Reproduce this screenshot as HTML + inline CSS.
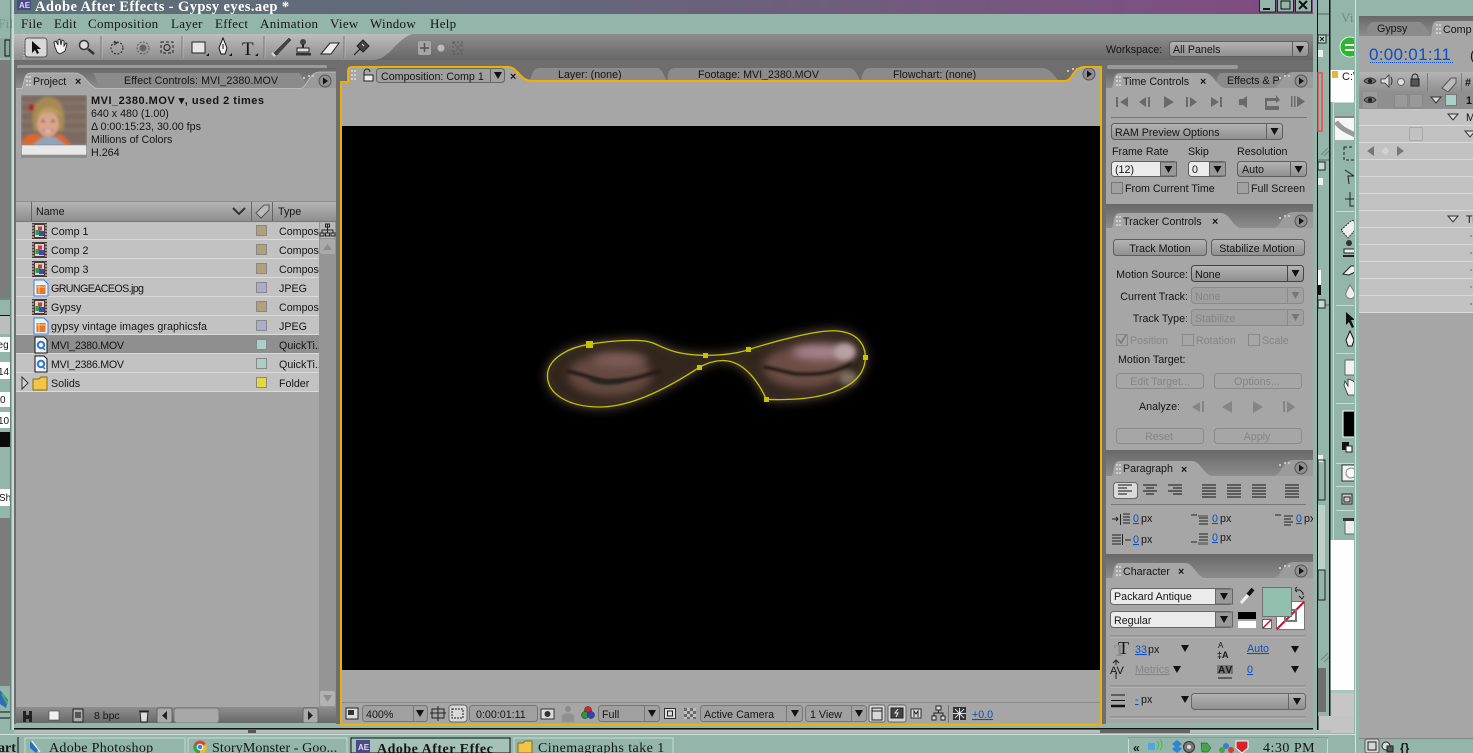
<!DOCTYPE html>
<html><head><meta charset="utf-8"><style>
html,body{margin:0;padding:0;background:#93b5aa;overflow:hidden}
svg{display:block;font-family:"Liberation Sans",sans-serif;font-size:10.7px}
text{fill:#151515}
.s{font-family:"Liberation Serif",serif;font-size:13px;letter-spacing:.3px}
.d text,text.d{fill:#858585}
.b{fill:#0b4fc4;text-decoration:underline dotted}
.m{text-anchor:middle}.e{text-anchor:end}
</style></head><body>
<svg width="1473" height="753" viewBox="0 0 1473 753" xmlns="http://www.w3.org/2000/svg">
<defs>
<linearGradient id="tb" x1="0" x2="1" y1="0" y2="0"><stop offset="0" stop-color="#5c7078"/><stop offset=".45" stop-color="#66667a"/><stop offset="1" stop-color="#824b82"/></linearGradient>
<linearGradient id="g" x1="0" x2="0" y1="0" y2="1"><stop offset="0" stop-color="#b4b4b4"/><stop offset="1" stop-color="#8f8f8f"/></linearGradient>
<linearGradient id="g2" x1="0" x2="0" y1="0" y2="1"><stop offset="0" stop-color="#8e8e8e"/><stop offset="1" stop-color="#666"/></linearGradient>
<linearGradient id="tool" x1="0" x2="0" y1="0" y2="1"><stop offset="0" stop-color="#bdbdbd"/><stop offset="1" stop-color="#8d8d8d"/></linearGradient>
<linearGradient id="hd" x1="0" x2="0" y1="0" y2="1"><stop offset="0" stop-color="#686868"/><stop offset="1" stop-color="#8c8c8c"/></linearGradient>
<filter id="b6" x="-30%" y="-60%" width="160%" height="220%"><feGaussianBlur stdDeviation="6"/></filter>
<filter id="b4" x="-40%" y="-80%" width="180%" height="260%"><feGaussianBlur stdDeviation="4.500"/></filter>
<filter id="b3" x="-30%" y="-50%" width="160%" height="200%"><feGaussianBlur stdDeviation="3"/></filter>
<filter id="b1" x="-30%" y="-100%" width="160%" height="300%"><feGaussianBlur stdDeviation="1.200"/></filter>
<path id="tri" d="M-4,-3H4L0,4Z" fill="#111"/>
<path id="trig" d="M-4,-3H4L0,4Z" fill="#777"/>
<g id="menu"><circle r="6" fill="#8f8f8f" stroke="#555"/><path d="M-2,-3.500L3,0L-2,3.500Z" fill="#111"/><path d="M-22,-4h2v2h-2zM-17,-6h2v2h-2zM-13,-6h2v2h-2z" fill="#c4c4c4"/></g>
<g id="grip" fill="#cfcfcf"><rect x="0" y="0" width="2" height="2"/><rect x="3" y="0" width="2" height="2"/><rect x="0" y="4" width="2" height="2"/><rect x="3" y="4" width="2" height="2"/><rect x="0" y="8" width="2" height="2"/><rect x="3" y="8" width="2" height="2"/></g>
<g id="cmp"><rect x="0" y="0" width="15" height="16" fill="#4a3a3a"/><rect x="3" y="2" width="9" height="12" fill="#d8d4cc"/><path d="M0,2h2M0,5h2M0,8h2M0,11h2M0,14h2M13,2h2M13,5h2M13,8h2M13,11h2M13,14h2" stroke="#ddd" stroke-width="1"/><rect x="6" y="3.500" width="4" height="4" fill="#d33"/><rect x="3.500" y="7" width="5" height="5" fill="#29a04a"/><rect x="7" y="8" width="5" height="5" fill="#3b45c8"/></g>
<g id="jpg"><path d="M1,0H11L15,4V16H1Z" fill="#e8f2ff" stroke="#4a7ad0"/><rect x="3.500" y="5" width="9" height="9" fill="#e8762a"/><path d="M4,7h8M6,5v9" stroke="#f6d36a"/></g>
<g id="mov"><path d="M1,0H10L13,3V16H1Z" fill="#f4f4f4" stroke="#111"/><circle cx="7" cy="8" r="3.200" fill="none" stroke="#2a7ad8" stroke-width="2"/><path d="M8,10l3,3" stroke="#2a7ad8" stroke-width="1.500"/></g>
<g id="eye"><path d="M-6,0C-3,-4 3,-4 6,0C3,3.500 -3,3.500 -6,0Z" fill="#777" stroke="#333"/><circle r="2.200" fill="#222"/></g>
<g id="al"><path d="M0,0h14M0,3h14M0,6h14M0,9h14M0,12h14" stroke="#111" stroke-width="1"/></g>
</defs>

<rect width="1473" height="753" fill="#93b5aa"/>
<!-- left strip -->
<text x="-2" y="28" class="s" style="fill:#75918a">Fil</text>
<rect x="0" y="38" width="10" height="20" fill="#8aa79e"/><rect x="5" y="40" width="5" height="16" fill="none" stroke="#111"/>
<rect x="0" y="60" width="10" height="238" fill="#7c7c7c"/>
<rect x="0" y="298" width="10" height="2" fill="#6f8c83"/>
<rect x="0" y="315" width="10" height="1" fill="#111"/><rect x="0" y="316" width="10" height="18" fill="#bdbdbd"/>
<rect x="0" y="337" width="10" height="15" fill="#fff"/><text x="-8" y="348" style="font-size:10px">Leg</text>
<rect x="0" y="362" width="10" height="17" fill="#fff"/><text x="-2" y="375" style="font-size:10px">14</text>
<rect x="0" y="392" width="10" height="15" fill="#fff"/><text x="0" y="403" style="font-size:10px">0</text>
<rect x="0" y="412" width="10" height="16" fill="#fff"/><text x="-2" y="424" style="font-size:10px">10</text>
<rect x="0" y="432" width="10" height="15" fill="#0a0a0a"/>
<rect x="0" y="489" width="10" height="17" fill="#fff"/><text x="-1" y="501" style="font-size:10px">Sh</text>
<rect x="0" y="518" width="10" height="168" fill="#7c7c7c"/>
<path d="M0,690L8,700L6,708L0,704Z" fill="#2a6ec0"/><path d="M2,694L7,703" stroke="#4caf50" stroke-width="2"/>
<path d="M0,712H10M0,718H10" stroke="#111"/>
<rect x="10" y="0" width="1" height="730" fill="#65837a"/><rect x="12" y="0" width="2" height="730" fill="#c6dcd5"/>

<!-- title -->
<rect x="14" y="0" width="1299" height="14" fill="url(#tb)"/>
<rect x="17" y="0" width="14" height="10" rx="1" fill="#4a4a88"/><text x="19" y="8" style="font-size:8px;font-weight:bold;fill:#d8d8ee">AE</text>
<text x="35" y="11" style="font-family:'Liberation Serif',serif;font-weight:bold;font-size:14.5px;fill:#fff;letter-spacing:.4px">Adobe After Effects - Gypsy eyes.aep *</text>
<g fill="#93b5aa" stroke="#222"><rect x="1259.500" y="-2" width="16" height="14"/><rect x="1277.500" y="-2" width="16" height="14"/><rect x="1295.500" y="-2" width="16" height="14"/></g>
<path d="M1263,9h7" stroke="#111" stroke-width="2"/><rect x="1281" y="1" width="9" height="8" fill="none" stroke="#111"/><path d="M1299,1l8,8M1307,1l-8,8" stroke="#111" stroke-width="2"/>
<!-- menu -->
<g class="men"><text x="21" y="28" class="s">File</text><text x="54" y="28" class="s">Edit</text><text x="88" y="28" class="s">Composition</text><text x="171" y="28" class="s">Layer</text><text x="215" y="28" class="s">Effect</text><text x="260" y="28" class="s">Animation</text><text x="330" y="28" class="s">View</text><text x="370" y="28" class="s">Window</text><text x="430" y="28" class="s">Help</text></g>

<!-- app background -->
<rect x="14" y="34" width="1299" height="696" fill="#6e6e6e"/>
<rect x="14" y="34" width="1299" height="26" fill="url(#g2)"/>
<path d="M14,34H412C395,40 390,60 372,60H14Z" fill="url(#tool)"/>
<rect x="14" y="60" width="1299" height="8" fill="#6e6e6e"/>
<path d="M21,34v26" stroke="#ccc" stroke-dasharray="1 2" transform="translate(3,0)"/>

<!-- tools -->
<rect x="25" y="38" width="22" height="19" rx="3" fill="#d8d8d8" stroke="#555"/>
<path d="M32,41V53L35,50L37,54L39,53L37,49H41Z" fill="#111"/>
<path d="M55,47L54,42L56,41L58,45L58,40L60,39L61,45L62,40L64,41L64,46L66,43L67,44L65,51L60,54L57,52Z" fill="#f4f4f4" stroke="#222" stroke-width=".9"/>
<circle cx="84" cy="45" r="4.500" fill="#ddd" stroke="#333" stroke-width="1.500"/><path d="M88,49l6,5" stroke="#333" stroke-width="2.500"/>
<path d="M101,36v22M182,36v22M264,36v22M344,36v22" stroke="#777"/><path d="M102,36v22M183,36v22M265,36v22M345,36v22" stroke="#c6c6c6" opacity=".6"/>
<circle cx="117" cy="48" r="6" fill="none" stroke="#222" stroke-dasharray="2 1.500"/><path d="M114,41l3,2l-3,2" fill="none" stroke="#222"/>
<circle cx="143" cy="48" r="6" fill="none" stroke="#555" stroke-dasharray="2 1.500"/><circle cx="143" cy="48" r="3.500" fill="#666"/>
<rect x="161" y="42" width="12" height="11" fill="none" stroke="#222" stroke-dasharray="3 2"/><circle cx="167" cy="47.500" r="3" fill="none" stroke="#222"/>
<rect x="192" y="42" width="13" height="11" fill="#e6e6e6" stroke="#222"/>
<path d="M223,38L227,48L225,54H221L219,48Z" fill="#f0f0f0" stroke="#111"/><path d="M223,44v5" stroke="#111"/>
<text x="242" y="55" style="font-family:'Liberation Serif',serif;font-size:19px">T</text>
<path d="M273,54L286,41L289,38L291,40L288,43L277,55Z" fill="#444" stroke="#222" stroke-width=".5"/><path d="M272,53l3,3" stroke="#ddd" stroke-width="2"/>
<circle cx="303" cy="42" r="3" fill="#444"/><path d="M303,44v4" stroke="#222" stroke-width="2"/><rect x="297" y="48" width="12" height="4" fill="#ddd" stroke="#222"/><rect x="296" y="53" width="15" height="2.500" fill="#333"/>
<path d="M321,54L330,43H339L331,54Z" fill="#ececec" stroke="#222"/>
<path d="M354,55L360,49" stroke="#222" stroke-width="1.200"/><path d="M357,46L363,40L369,46L363,52Z" fill="#444" stroke="#222"/><path d="M362,44l2,2" stroke="#ddd"/>
<path d="M206,56h3v-3zM229,56h3v-3zM255,56h3v-3z" fill="#111"/>
<rect x="418" y="41" width="13" height="14" rx="2" fill="#a5a5a5"/><path d="M424.500,43v9M420,48h9" stroke="#555" stroke-width="1.500"/>
<circle cx="441" cy="48" r="4" fill="#bbb" stroke="#777"/>
<path d="M453,42h9v12h-9z" fill="none" stroke="#555" stroke-dasharray="2 2"/><path d="M454,43l8,10M462,43l-8,10" stroke="#666"/>

<!-- workspace -->
<text x="1106" y="53">Workspace:</text>
<rect x="1169.500" y="41.500" width="139" height="15" rx="3" fill="url(#g)" stroke="#5f5f5f"/><path d="M1292.500,42v14" stroke="#5f5f5f"/><use href="#tri" x="1300" y="49"/>
<text x="1173" y="53">All Panels</text>
<!-- resizers -->
<rect x="17" y="65" width="310" height="4" rx="2" fill="#9a9a9a"/>
<rect x="1107" y="65" width="131" height="4" rx="2" fill="#9a9a9a"/>

<!-- project panel -->
<rect x="15" y="68" width="321" height="20" fill="url(#hd)"/>
<rect x="16" y="88" width="320" height="636" fill="#a6a6a6"/>
<path d="M93,73H298C302,73 304,84 308,88H100C96,82 95,74 93,73Z" fill="#8b8b8b"/>
<path d="M16,88H22C25,80 24,73 31,73H75C84,73 88,85 96,88Z" fill="#a6a6a6"/>
<path d="M301,88C308,86 309,72 320,72H336V88Z" fill="#9a9a9a"/>
<path d="M16,88.500H22C25,80 24,73 31,73H75C84,73 88,85 96,88.500H301C308,86 309,72 320,72H336" fill="none" stroke="#c2c2c2" stroke-width=".8"/>
<use href="#grip" x="26" y="76"/><text x="33" y="85">Project</text><text x="75" y="85" style="font-weight:bold">×</text>
<text x="124" y="84" textLength="154">Effect Controls: MVI_2380.MOV</text>
<use href="#menu" x="325" y="81"/>
<!-- thumb -->
<svg x="21" y="95" width="66" height="50"><g filter="url(#b1)"><rect width="66" height="50" fill="#7c6b60"/><path d="M0,8h66M0,17h66M0,26h66M0,35h66" stroke="#95867a"/><path d="M13,36C8,15 15,2 27,2C40,2 46,15 42,36Z" fill="#a58a52"/><ellipse cx="27" cy="29" rx="11" ry="13" fill="#d9a488"/><path d="M15,22C20,10 36,8 41,22C34,16 22,16 15,22Z" fill="#b89c60"/><path d="M22,35C25,38 29,38 32,35Z" fill="#fff" stroke="#a55" stroke-width=".7"/><circle cx="22" cy="26" r="1.300" fill="#335"/><circle cx="32" cy="26" r="1.300" fill="#335"/><rect x="8" y="9" width="5" height="7" fill="#b01818"/><path d="M0,50C2,42 8,38 16,39L27,44L38,39C42,40 46,44 50,50Z" fill="#d8692e"/><path d="M12,50L22,42L34,42L44,50Z" fill="#8da4b8"/></g></svg>
<rect x="21.500" y="145" width="65" height="10" fill="#e8e8e8" stroke="#777" stroke-width=".5"/><rect x="21" y="155" width="66" height="3" fill="#8d8d8d"/>
<text x="91" y="104" style="font-weight:bold;font-size:11px" textLength="173">MVI_2380.MOV ▾, used 2 times</text>
<text x="91" y="117">640 x 480 (1.00)</text>
<text x="91" y="130">Δ 0:00:15:23, 30.00 fps</text>
<text x="91" y="143">Millions of Colors</text>
<text x="91" y="156">H.264</text>
<!-- list header -->
<rect x="16" y="202" width="304" height="19" fill="url(#g)"/><rect x="320" y="202" width="16" height="19" fill="url(#g)"/>
<path d="M16,201.500H336" stroke="#8d8d8d"/><path d="M31.500,202v19M251.500,202v19M272.500,202v19" stroke="#666"/><path d="M16,221.500H336" stroke="#777"/>
<text x="36" y="215">Name</text><text x="278" y="215">Type</text>
<path d="M233,208l6,6l6,-6" fill="none" stroke="#333" stroke-width="2"/>
<path d="M256,213L264,205H269V210L261,218Z" fill="#bbb" stroke="#555"/>
<!-- list rows -->
<rect x="16" y="222" width="304" height="170" fill="#c2c2c2"/>
<rect x="16" y="335" width="304" height="19" fill="#8f8f8f"/>
<path d="M16,239.500H320M16,258.500H320M16,277.500H320M16,296.500H320M16,315.500H320M16,334.500H320M16,353.500H320M16,372.500H320M16,391.500H320" stroke="#dadada"/>
<use href="#cmp" x="32" y="223"/><use href="#cmp" x="32" y="242"/><use href="#cmp" x="32" y="261"/><use href="#jpg" x="33" y="280"/><use href="#cmp" x="32" y="299"/><use href="#jpg" x="33" y="318"/><use href="#mov" x="34" y="337"/><use href="#mov" x="34" y="356"/>
<path d="M21,377l6,6l-6,6z" fill="#d4d4d4" stroke="#333" transform="translate(1,0)"/>
<path d="M33,379H39L41,377H47V390H33Z" fill="#f1c646" stroke="#8a6b16"/>
<g><text x="51" y="235">Comp 1</text><text x="51" y="254">Comp 2</text><text x="51" y="273">Comp 3</text><text x="51" y="292" textLength="93">GRUNGEACEOS.jpg</text><text x="51" y="311">Gypsy</text><text x="51" y="330" textLength="156">gypsy vintage images graphicsfa</text><text x="51" y="349" textLength="73">MVI_2380.MOV</text><text x="51" y="368" textLength="73">MVI_2386.MOV</text><text x="51" y="387">Solids</text></g>
<g stroke="#888"><rect x="256.500" y="225.500" width="10" height="10" fill="#b4a078"/><rect x="256.500" y="244.500" width="10" height="10" fill="#b4a078"/><rect x="256.500" y="263.500" width="10" height="10" fill="#b4a078"/><rect x="256.500" y="282.500" width="10" height="10" fill="#ababcf"/><rect x="256.500" y="301.500" width="10" height="10" fill="#b4a078"/><rect x="256.500" y="320.500" width="10" height="10" fill="#ababcf"/><rect x="256.500" y="339.500" width="10" height="10" fill="#a9cfc8"/><rect x="256.500" y="358.500" width="10" height="10" fill="#a9cfc8"/><rect x="256.500" y="377.500" width="10" height="10" fill="#e7d83c"/></g>
<g><text x="279" y="235">Composi</text><text x="279" y="254">Composi</text><text x="279" y="273">Composi</text><text x="279" y="292">JPEG</text><text x="279" y="311">Composi</text><text x="279" y="330">JPEG</text><text x="279" y="349">QuickTi..</text><text x="279" y="368">QuickTi..</text><text x="279" y="387">Folder</text></g>
<rect x="319" y="222" width="17" height="486" fill="#959595"/>
<rect x="320" y="222" width="15" height="16" rx="2" fill="#b8b8b8"/><path d="M327.500,224v4M322,233v-3h11v3M327.500,228v5" stroke="#222" fill="none"/><rect x="325.500" y="224" width="4" height="3" fill="none" stroke="#222"/><rect x="320" y="233" width="4" height="3" fill="none" stroke="#222"/><rect x="331" y="233" width="4" height="3" fill="none" stroke="#222"/><rect x="325.500" y="233" width="4" height="3" fill="none" stroke="#222"/>
<rect x="320" y="239" width="15" height="15" rx="2" fill="#aaa"/><path d="M323,250l4.500,-6l4.500,6z" fill="#8d8d8d"/>
<rect x="320" y="691" width="15" height="15" rx="2" fill="#b2b2b2"/><path d="M323,695l4.500,7l4.500,-7z" fill="#8e8e8e"/>
<!-- project bottom -->
<rect x="16" y="707" width="320" height="17" fill="url(#g2)"/>
<path d="M23,711h3v11h-3zM29,711h3v11h-3zM26,715h3v4h-3z" fill="#222"/>
<rect x="49" y="711" width="10" height="9" fill="#f0f0f0" stroke="#444" stroke-width=".6"/>
<rect x="73" y="709" width="10" height="13" fill="#aaa" stroke="#222"/><rect x="75" y="712" width="6" height="6" fill="#555"/>
<text x="94" y="719" style="font-size:10.500px">8 bpc</text>
<path d="M140,712h8l-1,10h-6zM139,711h10" stroke="#222" fill="#ddd"/>
<rect x="157" y="708" width="15" height="15" rx="2" fill="#aaa" stroke="#666"/><path d="M167,711v9l-5,-4.500z" fill="#222"/>
<rect x="174" y="708" width="45" height="15" rx="3" fill="#a8a8a8" stroke="#777"/>
<rect x="303" y="708" width="15" height="15" rx="2" fill="#aaa" stroke="#666"/><path d="M308,711v9l5,-4.500z" fill="#222"/>

<!-- comp panel -->
<rect x="342" y="68" width="758" height="15" fill="#6e6e6e"/>
<path d="M529,82C533,74 532,68 540,68H657C662,68 663,75 668,82Z" fill="#8b8b8b"/>
<path d="M668,82C667,74 668,68 676,68H850C854,68 858,76 861,82Z" fill="#8b8b8b"/>
<path d="M861,82C862,74 864,68 870,68H1042C1050,68 1054,76 1060,82Z" fill="#8b8b8b"/>
<path d="M341,82H348V72C348,68 349,67 353,67H508C518,67 520,81 532,81H1065C1073,81 1072,67 1085,67H1101V724H341Z" fill="#a6a6a6"/>
<rect x="342" y="126" width="758" height="544" fill="#000"/>
<rect x="342" y="702" width="758" height="1" fill="#8a8a8a"/>
<use href="#grip" x="351" y="70" /><path d="M364,75v-3a3,3 0 0 1 6,0" fill="none" stroke="#222"/><rect x="364" y="75" width="9" height="6" fill="#eee" stroke="#222"/>
<rect x="376.500" y="68.500" width="128" height="14" rx="3" fill="#a0a0a0" stroke="#666"/><path d="M490.500,69v13" stroke="#666"/><use href="#tri" x="498" y="75"/>
<text x="381" y="80">Composition: Comp 1</text><text x="510" y="80" style="font-weight:bold">×</text>
<text x="558" y="78">Layer: (none)</text><text x="698" y="78" textLength="121">Footage: MVI_2380.MOV</text><text x="893" y="78">Flowchart: (none)</text>
<use href="#menu" x="1089" y="74"/>

<!-- eyes -->
<g>
<path d="M589.300,344.300C610,341 640,338 653,343C665,348 675,355 705.300,355.300C720,355.300 735,354 748.300,349.700C775,341 820,329 838,331C858,333 865.300,345 865.300,357.300C865.300,385 830,402 766.300,399.300C760,385 745,360 722,360.500C712,361 705,364 699.300,367.300C665,390 630,407 600,407C570,407 547,395 547.500,375C548,358 570,347 589.300,344.300Z" fill="#6a5c4e" filter="url(#b6)"/>
<path d="M589.300,344.300C610,341 640,338 653,343C665,348 675,355 705.300,355.300C720,355.300 735,354 748.300,349.700C775,341 820,329 838,331C858,333 865.300,345 865.300,357.300C865.300,385 830,402 766.300,399.300C760,385 745,360 722,360.500C712,361 705,364 699.300,367.300C665,390 630,407 600,407C570,407 547,395 547.500,375C548,358 570,347 589.300,344.300Z" fill="#33261e" filter="url(#b3)"/>
<ellipse cx="610" cy="375" rx="42" ry="21" fill="#654840" filter="url(#b4)"/>
<ellipse cx="620" cy="360" rx="27" ry="7" fill="#7d5b56" filter="url(#b4)"/>
<path d="M566,371C585,374 598,382 612,381C630,381 645,375 660,371" fill="none" stroke="#241814" stroke-width="3.500" filter="url(#b1)"/>
<path d="M590,379C600,384 615,384 625,380" fill="none" stroke="#242820" stroke-width="3.500" filter="url(#b1)"/>
<ellipse cx="805" cy="367" rx="42" ry="21" fill="#6c4d45" filter="url(#b4)"/>
<ellipse cx="822" cy="352" rx="30" ry="8" fill="#a5828a" filter="url(#b4)"/>
<ellipse cx="845" cy="352" rx="11" ry="9" fill="#b8a2a4" filter="url(#b3)"/>
<ellipse cx="848" cy="378" rx="9" ry="7" fill="#7d6e64" filter="url(#b3)"/>
<path d="M763,367C780,369 790,375 805,374C825,375 838,370 852,364" fill="none" stroke="#241a16" stroke-width="3.500" filter="url(#b1)"/>
<path d="M589.300,344.300C610,341 640,338 653,343C665,348 675,355 705.300,355.300C720,355.300 735,354 748.300,349.700C775,341 820,329 838,331C858,333 865.300,345 865.300,357.300C865.300,385 830,402 766.300,399.300C760,385 745,360 722,360.500C712,361 705,364 699.300,367.300C665,390 630,407 600,407C570,407 547,395 547.500,375C548,358 570,347 589.300,344.300Z" fill="none" stroke="#c8c200" stroke-width="1.300"/>
<g fill="#c8c200"><rect x="586" y="341" width="7" height="7"/><rect x="703" y="353" width="5" height="5"/><rect x="746" y="347" width="5" height="5"/><rect x="863" y="355" width="5" height="5"/><rect x="764" y="397" width="5" height="5"/><rect x="697" y="365" width="5" height="5"/></g>
</g>

<!-- comp bottom bar -->
<rect x="346" y="708" width="12" height="11" fill="#ddd" stroke="#222"/><rect x="348" y="710" width="6" height="5" fill="#333"/>
<rect x="362.500" y="705.500" width="65" height="16" rx="3" fill="#a0a0a0" stroke="#777"/><path d="M413.500,706v15" stroke="#777"/><use href="#tri" x="420" y="713"/><text x="366" y="718">400%</text>
<rect x="432" y="709" width="12" height="9" fill="none" stroke="#222"/><path d="M438,706v15M430,713h16" stroke="#222"/>
<rect x="449" y="705" width="18" height="17" rx="3" fill="#d8d8d8" stroke="#666"/><rect x="452" y="709" width="11" height="9" fill="none" stroke="#222" stroke-dasharray="2 1"/>
<rect x="469.500" y="705.500" width="68" height="16" rx="3" fill="#a0a0a0" stroke="#777"/><text x="476" y="718">0:00:01:11</text>
<rect x="541" y="709" width="13" height="10" fill="#ddd" stroke="#333"/><circle cx="547.500" cy="714" r="3" fill="#333"/>
<circle cx="568" cy="709" r="3" fill="#8b8b8b"/><path d="M562,722V715Q568,711 574,715V722Z" fill="#8f8f8f" stroke="#9c9c9c"/>
<circle cx="588" cy="710" r="3.500" fill="#cc2a2a" stroke="#222" stroke-width=".5"/><circle cx="585" cy="715" r="3.500" fill="#2a9a3a" stroke="#222" stroke-width=".5"/><circle cx="591" cy="715" r="3.500" fill="#2f45c0" stroke="#222" stroke-width=".5"/>
<rect x="598.500" y="705.500" width="61" height="16" rx="3" fill="#a0a0a0" stroke="#777"/><path d="M644.500,706v15" stroke="#777"/><use href="#tri" x="652" y="713"/><text x="602" y="718">Full</text>
<rect x="664.500" y="708.500" width="11" height="10" fill="#ddd" stroke="#333"/><rect x="667.500" y="711" width="5" height="5" fill="#ddd" stroke="#222"/>
<path d="M684,708h3v3h-3zM690,708h3v3h-3zM687,711h3v3h-3zM693,711h3v3h-3zM684,714h3v3h-3zM690,714h3v3h-3zM687,717h3v2h-3zM693,717h3v2h-3z" fill="#222"/><rect x="684" y="708" width="12" height="11" fill="#eee" opacity=".35"/>
<rect x="700.500" y="705.500" width="102" height="16" rx="3" fill="#a0a0a0" stroke="#777"/><path d="M786.500,706v15" stroke="#777"/><use href="#tri" x="795" y="713"/><text x="704" y="718">Active Camera</text>
<rect x="805.500" y="705.500" width="61" height="16" rx="3" fill="#a0a0a0" stroke="#777"/><path d="M851.500,706v15" stroke="#777"/><use href="#tri" x="859" y="713"/><text x="810" y="718">1 View</text>
<rect x="869" y="705" width="16" height="17" rx="2" fill="#d8d8d8" stroke="#666"/><rect x="872" y="708" width="10" height="12" fill="none" stroke="#222"/><path d="M872,711h10" stroke="#222"/>
<rect x="888" y="705" width="18" height="17" rx="2" fill="#d0d0d0" stroke="#666"/><rect x="891" y="708" width="12" height="10" fill="#444" stroke="#222"/><path d="M898,709l-3,4h3l-2,4" stroke="#eee" fill="none"/>
<rect x="911" y="709" width="10" height="9" fill="#ddd" stroke="#333"/><path d="M914,717V711l2,3l2,-3v6" fill="none" stroke="#222"/>
<rect x="936" y="706" width="5" height="4" fill="#ddd" stroke="#222"/><rect x="932" y="716" width="4" height="4" fill="#ddd" stroke="#222"/><rect x="941" y="716" width="4" height="4" fill="#ddd" stroke="#222"/><path d="M938.500,710v3M934,716v-3h9v3" fill="none" stroke="#222"/>
<path d="M948.500,705v18" stroke="#777"/>
<rect x="953" y="707" width="13" height="13" fill="#333"/><path d="M959.500,708v12M953,713.500h13M955,709l9,9M964,709l-9,9" stroke="#ddd"/>
<text x="972" y="718" class="b">+0.0</text>

<!-- time controls -->
<rect x="1106" y="70" width="207" height="18" fill="url(#hd)"/>
<rect x="1106" y="88" width="207" height="116" fill="#a6a6a6"/>
<path d="M1218,88C1216,80 1218,73 1222,73H1285L1280,88Z" fill="#8b8b8b"/>
<path d="M1106,88H1112C1115,80 1113,73 1120,73H1205C1213,73 1216,85 1224,88Z" fill="#a6a6a6"/>
<path d="M1274,88C1282,86 1282,72 1294,72H1313V88Z" fill="#9b9b9b"/>
<use href="#grip" x="1116" y="76"/><text x="1123" y="85">Time Controls</text><text x="1200" y="85" style="font-weight:bold">×</text>
<text x="1227" y="84">Effects &amp; P</text><use href="#menu" x="1301" y="81"/>
<g fill="#6a6a6a"><path d="M1116,97h2v10h-2zM1128,97v10l-8,-5z"/><path d="M1139,102l7,-5v10zM1148,97h2v10h-2z"/><path d="M1164,96l10,6l-10,6z"/><path d="M1186,97h2v10h-2zM1190,97l7,5l-7,5z"/><path d="M1211,97l8,5l-8,5zM1220,97h2v10h-2z"/><path d="M1239,99h4l4,-3v12l-4,-3h-4z"/><path d="M1265,98h11v-3l4,5l-4,3v-2h-9v5h12v4h-14z"/><path d="M1291,96h1.500v11H1291zM1294,96h1.500v11H1294zM1297,96v11l8,-5.500z"/></g>
<path d="M1111,117.500H1307" stroke="#777"/>
<rect x="1111.500" y="123.500" width="171" height="16" rx="3" fill="url(#g)" stroke="#5f5f5f"/><path d="M1266.500,124v15" stroke="#5f5f5f"/><use href="#tri" x="1274.500" y="131"/><text x="1115" y="136">RAM Preview Options</text>
<text x="1112" y="155">Frame Rate</text><text x="1188" y="155">Skip</text><text x="1237" y="155">Resolution</text>
<rect x="1111.500" y="161.500" width="65" height="15" rx="3" fill="#ebebeb" stroke="#5f5f5f"/><rect x="1160.500" y="162" width="16" height="14" fill="#999" stroke="#5f5f5f"/><use href="#tri" x="1168.500" y="169"/><text x="1115" y="173">(12)</text>
<rect x="1188.500" y="161.500" width="37" height="15" rx="3" fill="#ebebeb" stroke="#5f5f5f"/><rect x="1209.500" y="162" width="16" height="14" fill="#999" stroke="#5f5f5f"/><use href="#tri" x="1217.500" y="169"/><text x="1192" y="173">0</text>
<rect x="1237.500" y="161.500" width="69" height="15" rx="3" fill="url(#g)" stroke="#5f5f5f"/><path d="M1290.500,162v14" stroke="#5f5f5f"/><use href="#tri" x="1298.500" y="169"/><text x="1242" y="173">Auto</text>
<rect x="1111.500" y="182.500" width="11" height="11" fill="#a0a0a0" stroke="#777"/><text x="1125" y="192">From Current Time</text>
<rect x="1237.500" y="182.500" width="11" height="11" fill="#a0a0a0" stroke="#777"/><text x="1251" y="192">Full Screen</text>

<!-- tracker -->
<rect x="1106" y="204" width="207" height="24" fill="url(#hd)"/>
<rect x="1106" y="228" width="207" height="222" fill="#a6a6a6"/>
<path d="M1106,228H1112C1115,220 1113,213 1120,213H1221C1229,213 1232,225 1240,228Z" fill="#a6a6a6"/>
<path d="M1274,228C1282,226 1282,212 1294,212H1313V228Z" fill="#9b9b9b"/>
<use href="#grip" x="1116" y="216"/><text x="1123" y="225">Tracker Controls</text><text x="1212" y="225" style="font-weight:bold">×</text><use href="#menu" x="1301" y="221"/>
<rect x="1113.500" y="239.500" width="93" height="16" rx="3" fill="url(#g)" stroke="#5f5f5f"/><rect x="1211.500" y="239.500" width="93" height="16" rx="3" fill="url(#g)" stroke="#5f5f5f"/>
<text x="1160" y="252" class="m">Track Motion</text><text x="1257" y="252" class="m">Stabilize Motion</text>
<text x="1188" y="278" class="e">Motion Source:</text>
<rect x="1191.500" y="265.500" width="112" height="16" rx="3" fill="url(#g)" stroke="#444"/><path d="M1287.500,266v15" stroke="#444"/><use href="#tri" x="1295.500" y="273"/><text x="1195" y="278">None</text>
<text x="1188" y="300" class="e">Current Track:</text>
<g class="d"><rect x="1191.500" y="287.500" width="112" height="16" rx="3" fill="#a0a0a0" stroke="#8a8a8a"/><path d="M1287.500,288v15" stroke="#8a8a8a"/><use href="#trig" x="1295.500" y="295"/><text x="1195" y="300">None</text></g>
<text x="1188" y="322" class="e">Track Type:</text>
<g class="d"><rect x="1191.500" y="309.500" width="112" height="16" rx="3" fill="#a0a0a0" stroke="#8a8a8a"/><path d="M1287.500,310v15" stroke="#8a8a8a"/><use href="#trig" x="1295.500" y="317"/><text x="1195" y="322">Stabilize</text>
<rect x="1116.500" y="334.500" width="11" height="11" fill="none" stroke="#888"/><path d="M1118,339l3,4l5,-8" fill="none" stroke="#777" stroke-width="1.500"/><text x="1130" y="344">Position</text>
<rect x="1182.500" y="334.500" width="11" height="11" fill="none" stroke="#888"/><text x="1196" y="344">Rotation</text>
<rect x="1248.500" y="334.500" width="11" height="11" fill="none" stroke="#888"/><text x="1262" y="344">Scale</text>
<rect x="1116.500" y="373.500" width="87" height="15" rx="3" fill="#a6a6a6" stroke="#8a8a8a"/><text x="1160" y="385" class="m">Edit Target...</text>
<rect x="1214.500" y="373.500" width="87" height="15" rx="3" fill="#a6a6a6" stroke="#8a8a8a"/><text x="1257" y="385" class="m">Options...</text>
<rect x="1116.500" y="428.500" width="87" height="15" rx="3" fill="#a6a6a6" stroke="#8a8a8a"/><text x="1159" y="440" class="m">Reset</text>
<rect x="1214.500" y="428.500" width="87" height="15" rx="3" fill="#a6a6a6" stroke="#8a8a8a"/><text x="1257" y="440" class="m">Apply</text></g>
<text x="1118" y="363">Motion Target:</text>
<text x="1180" y="410" class="e">Analyze:</text>
<g fill="#858585"><path d="M1192,407l8,-5v10zM1202,401h2v11h-2z"/><path d="M1222,407l10,-6v12z"/><path d="M1253,401l10,6l-10,6z"/><path d="M1283,401h2v11h-2zM1287,401l8,6l-8,6z"/></g>

<!-- paragraph -->
<rect x="1106" y="450" width="207" height="26" fill="url(#hd)"/>
<rect x="1106" y="476" width="207" height="78" fill="#a6a6a6"/>
<path d="M1106,476H1112C1115,468 1113,461 1120,461H1192C1200,461 1203,473 1211,476Z" fill="#a6a6a6"/>
<path d="M1274,476C1282,474 1282,460 1294,460H1313V476Z" fill="#9b9b9b"/>
<use href="#grip" x="1116" y="464"/><text x="1123" y="472">Paragraph</text><text x="1181" y="473" style="font-weight:bold">×</text><use href="#menu" x="1301" y="468"/>
<rect x="1113.500" y="482.500" width="24" height="16" rx="3" fill="#dadada" stroke="#666"/>
<path d="M1118,485h14M1118,488h9M1118,491h14M1118,494h9M1143,485h14M1146,488h8M1143,491h14M1146,494h8M1168,485h14M1173,488h9M1168,491h14M1173,494h9" stroke="#111"/>
<use href="#al" x="1202" y="485"/><use href="#al" x="1227" y="485"/><use href="#al" x="1252" y="485"/><use href="#al" x="1285" y="485"/>
<path d="M1111,504.500H1306" stroke="#777"/>
<path d="M1112,519h6M1116,517l2,2l-2,2M1120.500,514v11M1123,514h7M1123,517h7M1123,520h7M1123,523h7" stroke="#222" fill="none"/>
<path d="M1191,515h6M1199,518h9M1199,521h9M1199,524h9" stroke="#222"/><rect x="1198" y="515" width="10" height="2" fill="#777"/>
<path d="M1275,515h6M1284,516h9M1284,519h7M1284,522h9M1284,525h7" stroke="#222"/>
<path d="M1112,535h9M1112,538h9M1112,541h9M1112,544h9M1122.500,534v11M1125,540h6" stroke="#222"/>
<path d="M1191,542h6M1199,534h9M1199,537h9M1199,540h9" stroke="#222"/><rect x="1198" y="542" width="10" height="3" fill="#777"/>
<text x="1133" y="522" class="b">0</text><text x="1141" y="522">px</text><text x="1212" y="522" class="b">0</text><text x="1220" y="522">px</text><text x="1296" y="522" class="b">0</text><text x="1304" y="522">px</text>
<text x="1133" y="543" class="b">0</text><text x="1141" y="543">px</text><text x="1212" y="541" class="b">0</text><text x="1220" y="541">px</text>

<!-- character -->
<rect x="1106" y="554" width="207" height="24" fill="url(#hd)"/>
<rect x="1106" y="578" width="207" height="146" fill="#a6a6a6"/>
<path d="M1106,578H1112C1115,570 1113,563 1120,563H1185C1193,563 1196,575 1204,578Z" fill="#a6a6a6"/>
<path d="M1274,578C1282,576 1282,562 1294,562H1313V578Z" fill="#9b9b9b"/>
<use href="#grip" x="1116" y="566"/><text x="1123" y="575">Character</text><text x="1178" y="575" style="font-weight:bold">×</text><use href="#menu" x="1301" y="571"/>
<rect x="1110.500" y="588.500" width="122" height="16" rx="3" fill="#ebebeb" stroke="#666"/><rect x="1215.500" y="589" width="17" height="15" fill="#999" stroke="#666"/><use href="#tri" x="1224" y="596"/><text x="1114" y="600">Packard Antique</text>
<rect x="1110.500" y="611.500" width="122" height="16" rx="3" fill="#ebebeb" stroke="#666"/><rect x="1215.500" y="612" width="17" height="15" fill="#999" stroke="#666"/><use href="#tri" x="1224" y="619"/><text x="1114" y="624">Regular</text>
<path d="M1241,603L1249,594" stroke="#eee" stroke-width="3"/><path d="M1248,595l5,-6" stroke="#111" stroke-width="4"/>
<rect x="1238" y="612" width="18" height="7" fill="#000"/><rect x="1238" y="621" width="18" height="7" fill="#fff"/>
<rect x="1276.500" y="601.500" width="28" height="28" fill="#fff" stroke="#777"/><path d="M1277,629L1304,602" stroke="#c8102e" stroke-width="2"/><rect x="1285" y="610" width="11" height="11" fill="none" stroke="#777" stroke-width="2"/>
<rect x="1262.500" y="587.500" width="29" height="29" fill="#93bfae" stroke="#707070"/>
<path d="M1295,590h5l3,3v2M1304,596l-2,3l-3,-3M1295,589l2,-2M1295,590l2,2" fill="none" stroke="#222"/>
<rect x="1262.500" y="619.500" width="9" height="9" fill="#fff" stroke="#666"/><path d="M1263,628l8,-8" stroke="#c8102e" stroke-width="1.500"/>
<path d="M1110,636H1305M1110,686H1305M1110,717H1305" stroke="#808080"/><path d="M1110,637H1305M1110,687H1305M1110,718H1305" stroke="#bdbdbd"/>
<text x="1114" y="656" style="font-family:'Liberation Serif',serif;font-size:17px;font-weight:bold;fill:#8b8b8b">T</text><text x="1118" y="654" style="font-family:'Liberation Serif',serif;font-size:18px">T</text>
<text x="1135" y="653" class="b">33</text><text x="1148" y="653">px</text><use href="#tri" x="1185" y="648"/>
<text x="1218" y="648" style="font-size:8px">A</text><text x="1217" y="658" style="font-size:9px;font-weight:bold">‡A</text>
<text x="1247" y="652" class="b">Auto</text><use href="#tri" x="1295" y="649"/>
<text x="1110" y="674" style="font-size:11px">AV</text><path d="M1116,660v5M1116,673v6M1113,663l3,-3l3,3" stroke="#222" fill="none"/>
<text x="1135" y="673" class="d b" style="fill:#858585">Metrics</text><use href="#tri" x="1177" y="669"/>
<rect x="1217" y="665" width="16" height="9" fill="#777"/><text x="1218" y="673" style="font-size:10px;letter-spacing:1px;font-weight:bold">AV</text><path d="M1218,678h14" stroke="#111"/>
<text x="1247" y="673" class="b">0</text><use href="#tri" x="1295" y="669"/>
<path d="M1111,695H1125" stroke="#111" stroke-width="1"/><path d="M1111,700.500H1125" stroke="#111" stroke-width="1"/><path d="M1111,706H1125" stroke="#111" stroke-width="2.500"/>
<text x="1135" y="703" class="b">-</text><text x="1141" y="703">px</text><use href="#tri" x="1185" y="699"/>
<rect x="1191.500" y="693.500" width="114" height="16" rx="3" fill="url(#g)" stroke="#666"/><path d="M1288.500,694v15" stroke="#666"/><use href="#tri" x="1297" y="701"/>

<!-- panel bottom / borders -->
<rect x="14" y="723" width="1299" height="7" fill="#93b5aa"/><rect x="14" y="728" width="1304" height="1.500" fill="#111"/>
<rect x="336" y="60" width="5" height="664" fill="#6e6e6e"/>
<rect x="1102" y="60" width="4" height="664" fill="#6e6e6e"/>
<rect x="14" y="60" width="2" height="664" fill="#6e6e6e"/>
<path d="M341,82H348V72C348,68 349,67 353,67H508C518,67 520,81 532,81H1065C1073,81 1072,67 1085,67H1101V725H341Z" fill="none" stroke="#f0b000" stroke-width="2"/>
<rect x="1313" y="0" width="4" height="730" fill="#93b5aa"/><rect x="1317" y="0" width="1.500" height="730" fill="#111"/>

<!-- second window strip -->
<rect x="1318" y="0" width="12" height="716" fill="#93b5aa"/><rect x="1329" y="0" width="1.500" height="716" fill="#111"/>
<path d="M1318,14H1329M1318,35H1329M1318,160H1329M1318,305H1329" stroke="#222" opacity=".5"/>
<rect x="1318" y="35" width="8" height="8" fill="#c4dad3" stroke="#222"/><path d="M1320,37l4,4M1324,37l-4,4" stroke="#111"/>
<rect x="1318" y="50" width="5" height="7" fill="#eee"/>
<rect x="1318" y="73" width="4" height="58" fill="none" stroke="#f04848" stroke-width="1.500"/>
<path d="M1321,155l7,-7M1324,156l5,-5" stroke="#6a8a80"/>
<rect x="1318" y="162" width="7" height="8" fill="#c4dad3" stroke="#222"/><rect x="1318" y="178" width="5" height="7" fill="#eee"/>
<rect x="1318" y="270" width="3" height="15" fill="#fff"/><rect x="1318" y="285" width="3" height="10" fill="#111"/>
<rect x="1318" y="300" width="7" height="8" fill="#c4dad3" stroke="#222"/>
<rect x="1318" y="455" width="5" height="7" fill="#eee"/>
<rect x="1318" y="460" width="7" height="40" fill="none" stroke="#222"/>
<rect x="1318" y="505" width="7" height="65" fill="#bcd0c8"/>
<rect x="1318" y="570" width="7" height="30" fill="none" stroke="#222"/>
<path d="M1321,660l7,-7M1324,662l5,-5" stroke="#6a8a80"/>
<rect x="1318" y="668" width="8" height="44" fill="#6f6f6f"/>

<!-- third window -->
<rect x="1330.500" y="0" width="24" height="100" fill="#93b5aa"/>
<text x="1341" y="22" class="s" style="fill:#6f8a82">Vi</text>
<circle cx="1350" cy="47" r="10" fill="#2fb52f" stroke="#e6f3e6"/><path d="M1345,45h10M1345,50h10" stroke="#fff" stroke-width="2"/>
<rect x="1330.500" y="70" width="24" height="18" fill="#fff"/><path d="M1332,71h6v7h-6z" fill="#e4b93a"/><text x="1342" y="80" style="font-size:11px">C:\</text>
<rect x="1330.500" y="88" width="24" height="14" fill="#fff"/>
<rect x="1330.500" y="102" width="24" height="438" fill="#93b5aa"/>
<rect x="1330.500" y="540" width="24" height="152" fill="#fff"/>
<path d="M1333.500,540V102.500H1355" fill="none" stroke="#c8dcd5"/>
<rect x="1335" y="116" width="20" height="24" fill="#f6f6f6"/><path d="M1335,117h20" stroke="#111"/><path d="M1336,122C1342,130 1350,132 1355,135" stroke="#999" stroke-width="5" fill="none"/>
<rect x="1344" y="147" width="11" height="13" fill="none" stroke="#222" stroke-dasharray="3 2"/>
<path d="M1345,170L1354,176L1348,176L1349,184" fill="none" stroke="#222"/>
<path d="M1350,192v14h5M1345,199h10" stroke="#222" fill="none"/>
<path d="M1336,211.500H1355M1336,305.500H1355M1336,353.500H1355" stroke="#c8dcd5"/>
<path d="M1341,230L1352,220L1355,222V230L1348,238Z" fill="#eee" stroke="#333" stroke-dasharray="2 1"/>
<circle cx="1349" cy="243" r="3" fill="#333"/><rect x="1344" y="249" width="11" height="4" fill="#eee" stroke="#222"/><rect x="1343" y="255" width="12" height="2" fill="#222"/>
<path d="M1343,274L1351,266H1355V272L1349,275Z" fill="#eee" stroke="#222"/>
<path d="M1350,285C1346,292 1344,295 1348,298C1352,300 1355,297 1355,294C1354,291 1352,288 1350,285Z" fill="#eee" stroke="#777"/>
<path d="M1346,312V325L1349,322L1352,328L1354,327L1351,320H1355Z" fill="#111"/>
<path d="M1350,331L1354,340L1352,346H1348L1346,340Z" fill="#eee" stroke="#111"/>
<rect x="1345" y="360" width="10" height="15" fill="#f1f1f1" stroke="#666"/>
<path d="M1344,385L1345,381L1348,386V379L1351,380L1355,382V395H1348Z" fill="#f4f4f4" stroke="#333" stroke-width=".8"/>
<path d="M1336,403.500H1355M1336,463.500H1355M1336,486.500H1355M1336,510.500H1355" stroke="#c8dcd5"/>
<rect x="1343" y="411" width="12" height="26" fill="#000" stroke="#fff"/>
<rect x="1342" y="442" width="7" height="8" fill="#111"/><rect x="1346" y="446" width="6" height="6" fill="#fff" stroke="#222"/>
<rect x="1342" y="465" width="13" height="16" fill="#f4f4f4" stroke="#333"/><circle cx="1351" cy="473" r="5" fill="#fff" stroke="#888"/>
<rect x="1342" y="494" width="10" height="10" fill="#ccc" stroke="#222"/><rect x="1344" y="497" width="6" height="5" fill="none" stroke="#222"/>
<rect x="1345" y="519" width="10" height="15" fill="#eee" stroke="#666"/><rect x="1343" y="518" width="12" height="3" fill="#333"/>
<rect x="1330.500" y="692" width="24" height="46" fill="#c6c6c6"/>
<rect x="1330.500" y="690" width="24" height="3" fill="#a9c6bc"/>
<rect x="1318.500" y="716" width="36" height="14" fill="#c4c4c4"/>

<rect x="1354" y="0" width="5" height="753" fill="#93b5aa"/><rect x="1355" y="0" width="1" height="753" fill="#d2e3dd"/>

<!-- right panel -->
<rect x="1359" y="16" width="114" height="20" fill="url(#hd)"/>
<rect x="1359" y="36" width="114" height="704" fill="#a6a6a6"/>
<path d="M1367,36C1367,27 1367,23 1374,22H1420C1426,25 1428,32 1432,36Z" fill="#8b8b8b"/>
<path d="M1424,36H1431C1433,28 1431,21 1438,21H1473V36Z" fill="#a6a6a6"/>
<use href="#grip" x="1436" y="24"/><text x="1377" y="32">Gypsy</text><text x="1443" y="33">Comp</text>
<text x="1369" y="60" style="font-size:17px;fill:#0b4fc4;letter-spacing:.3px">0:00:01:11</text>
<path d="M1370,62.500H1454" stroke="#0b4fc4" stroke-dasharray="1 1"/>
<text x="1470" y="60" style="font-size:14px">(</text>
<rect x="1359" y="72" width="114" height="20" fill="url(#g)"/>
<use href="#eye" x="1370" y="81"/>
<path d="M1381,79h4l4,-4v12l-4,-4h-4z" fill="#ddd" stroke="#333" stroke-width=".8"/><path d="M1391,77q2,4 0,8" stroke="#333" fill="none"/>
<circle cx="1401" cy="82" r="3.500" fill="#ddd" stroke="#666"/>
<path d="M1412,79v-2a3,3 0 0 1 6,0v2" fill="none" stroke="#222"/><rect x="1411" y="79" width="8" height="7" fill="#555" stroke="#222"/>
<path d="M1427.500,73v18M1461.500,73v18" stroke="#7c7c7c"/>
<path d="M1442,88L1451,78H1456V83L1448,92Z" fill="#bbb" stroke="#555"/>
<text x="1465" y="86" style="font-weight:bold">#</text>
<rect x="1359" y="92" width="114" height="17" fill="#8f8f8f"/>
<rect x="1363" y="92" width="14" height="16" fill="#999"/><use href="#eye" x="1370" y="100" />
<rect x="1394.500" y="94.500" width="13" height="13" fill="#999" stroke="#888"/><rect x="1409.500" y="94.500" width="13" height="13" fill="#999" stroke="#888"/>
<path d="M1431,97h10l-5,6z" fill="#ddd" stroke="#333"/>
<rect x="1445.500" y="94.500" width="11" height="11" fill="#a9cfc8" stroke="#777"/>
<text x="1466" y="104" style="font-weight:bold">1</text>
<rect x="1359" y="109" width="114" height="203" fill="#c2c2c2"/>
<path d="M1359,125.500H1473M1359,142.500H1473M1359,159.500H1473M1359,176.500H1473M1359,193.500H1473M1359,210.500H1473M1359,227.500H1473M1359,244.500H1473M1359,261.500H1473M1359,278.500H1473M1359,295.500H1473M1359,312.500H1473" stroke="#dadada"/>
<path d="M1448,114h10l-5,6z" fill="#ddd" stroke="#333"/><text x="1466" y="121">M</text>
<path d="M1465,131h10l-5,6z" fill="#ddd" stroke="#333"/>
<rect x="1409.500" y="127.500" width="13" height="13" fill="none" stroke="#aaa"/>
<path d="M1374,146l-7,5l7,5z" fill="#777"/><path d="M1397,146l7,5l-7,5z" fill="#777"/><path d="M1385.500,147l4,4l-4,4l-4,-4z" fill="#d2d2d2"/>
<path d="M1448,216h10l-5,6z" fill="#ddd" stroke="#333"/><text x="1466" y="223">Tr</text>
<path d="M1470,236h2M1470,253h2M1470,270h2M1470,287h2M1470,304h2" stroke="#666"/>
<rect x="1359" y="738" width="114" height="1" fill="#888"/>
<rect x="1365" y="739" width="14" height="14" rx="2" fill="#d6d6d6" stroke="#555"/><rect x="1368" y="742" width="8" height="8" fill="none" stroke="#222"/>
<circle cx="1386" cy="746" r="4" fill="#ddd" stroke="#222"/><rect x="1387" y="746" width="6" height="6" fill="#555" stroke="#222"/>
<text x="1400" y="752" style="font-weight:bold;font-size:12px">{}</text>

<!-- desktop / taskbar -->
<rect x="14" y="730" width="1317" height="3" fill="#b4c0bb"/>
<rect x="248" y="730" width="8" height="3" fill="#555"/>
<rect x="1100" y="730" width="90" height="3" fill="#666"/>
<rect x="0" y="733" width="1355" height="20" fill="#93b5aa"/><path d="M0,734.500H1355" stroke="#d2e3dd"/>
<text x="-2" y="752" style="font-family:'Liberation Serif',serif;font-weight:bold;font-size:14px">art</text><path d="M18,737V753" stroke="#111"/>
<path d="M25,753V738H185V753M188,753V738H347V753M514,753V738H673V753" fill="none" stroke="#c6dcd5"/>
<rect x="351" y="738" width="159" height="15" fill="#a4c2b8" stroke="#111"/>
<text x="49" y="752" style="font-family:'Liberation Serif',serif;font-size:14px;letter-spacing:.3px">Adobe Photoshop</text>
<text x="212" y="752" style="font-family:'Liberation Serif',serif;font-size:14px;letter-spacing:.1px">StoryMonster - Goo...</text>
<text x="377" y="753" style="font-family:'Liberation Serif',serif;font-size:14px;font-weight:bold;letter-spacing:.5px">Adobe After Effec</text>
<text x="538" y="752" style="font-family:'Liberation Serif',serif;font-size:14px;letter-spacing:.45px">Cinemagraphs take 1</text>
<path d="M30,741L38,750L36,753L30,748Z" fill="#2a6ec0"/><path d="M32,741L40,752" stroke="#fff"/>
<circle cx="200" cy="747" r="6.500" fill="#e0442e"/><path d="M200,747L206,744A6.500,6.500 0 0 1 200,753.500Z" fill="#f2c01e"/><path d="M200,747L200,753.500A6.500,6.500 0 0 1 194,744Z" fill="#34a24a"/><circle cx="200" cy="747" r="2.800" fill="#3c7fe0" stroke="#fff"/>
<rect x="356" y="740" width="14" height="13" fill="#4a4a88"/><text x="358" y="750" style="font-size:8px;font-weight:bold;fill:#dde">AE</text>
<path d="M518,743H523L525,741H532V753H518Z" fill="#f1c646" stroke="#8a6b16"/>
<!-- tray -->
<path d="M1128.500,753V738.500H1327.500V753" fill="none" stroke="#c6dcd5"/><path d="M1128,738H1328" stroke="#6e8b82"/>
<text x="1133" y="752" style="font-weight:bold;font-size:12px">«</text>
<rect x="1148" y="743" width="7" height="7" fill="#4aa8e8"/><path d="M1157,741q3,4 0,8M1160,739q4,6 0,11" stroke="#3cc33c" fill="none"/>
<path d="M1172,744l5,-4l5,4l-5,4zM1172,749l5,-4l5,4l-5,4z" fill="#2f83d8"/>
<circle cx="1189" cy="747" r="5.500" fill="#777" stroke="#333"/><circle cx="1189" cy="747" r="2" fill="#ddd"/>
<path d="M1201,743h6l4,5l-3,4h-6z" fill="#46a546" stroke="#333" stroke-width=".5"/>
<circle cx="1226" cy="746" r="3" fill="#3a7ad8"/><circle cx="1231" cy="750" r="3" fill="#d83a3a"/><circle cx="1222" cy="750" r="3" fill="#46a546"/>
<path d="M1236,741h12v7l-6,5l-6,-5z" fill="#d8202e" stroke="#fff"/>
<text x="1263" y="752" style="font-family:'Liberation Serif',serif;font-size:14px;letter-spacing:.5px">4:30 PM</text>
</svg>
</body></html>
